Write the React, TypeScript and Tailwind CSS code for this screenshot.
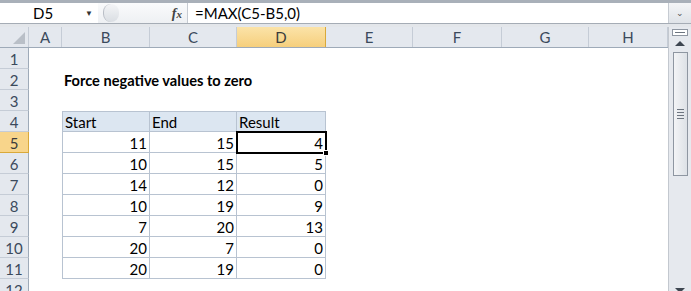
import React from 'react'

const cols = [
  { key: 'A', w: 'w-[33px]' },
  { key: 'B', w: 'w-[88px]' },
  { key: 'C', w: 'w-[87px]' },
  { key: 'D', w: 'w-[89px]' },
  { key: 'E', w: 'w-[87px]' },
  { key: 'F', w: 'w-[89px]' },
  { key: 'G', w: 'w-[87px]' },
  { key: 'H', w: 'flex-1' },
]

const data = [
  [11, 15, 4],
  [10, 15, 5],
  [14, 12, 0],
  [10, 19, 9],
  [7, 20, 13],
  [20, 7, 0],
  [20, 19, 0],
]

const font = "font-['Lato','Liberation_Sans',sans-serif]"

function RowHeader({ n, active }: { n: number; active?: boolean }) {
  return (
    <div
      className={`flex h-full w-[29px] shrink-0 items-end justify-center border-b border-r pb-[1px] text-[15px] leading-none ${
        active
          ? 'border-b-[#d9a93a] border-r-[#d9a93a] bg-[#f8d58b] text-[#3b3b3b]'
          : 'border-b-[#c5ccd6] border-r-[#9eaab8] bg-[#e4e8ee] text-[#3b4a5c]'
      }`}
    >
      {n}
    </div>
  )
}

function TableRow({ row, values }: { row: number; values: (string | number)[] }) {
  const header = row === 4
  return (
    <>
      <div className="w-[33px] shrink-0" />
      {values.map((v, i) => {
        const active = row === 5 && i === 2
        return (
          <div
            key={i}
            className={`relative flex h-full shrink-0 items-end border-b border-r border-[#b8c3d1] pb-[1px] text-[15px] leading-none text-black ${
              i === 0 ? 'w-[88px] border-l' : i === 1 ? 'w-[87px]' : 'w-[89px]'
            } ${header ? 'justify-start border-t bg-[#dce6f1] pl-[2px]' : 'justify-end pr-[2px]'} ${
              active ? 'z-10 outline-2 -outline-offset-1 outline-black' : ''
            }`}
          >
            {v}
            {active && (
              <div className="absolute -bottom-[4px] -right-[4px] h-[6px] w-[6px] border border-white bg-black" />
            )}
          </div>
        )
      })}
    </>
  )
}

export default function App() {
  const rows = Array.from({ length: 12 }, (_, i) => i + 1)
  return (
    <div className={`flex h-[291px] w-[691px] flex-col overflow-hidden bg-white ${font}`}>
      {/* formula bar */}
      <div className="h-[3px] shrink-0 bg-[#a9b0b9]" />
      <div className="flex h-[21px] shrink-0 items-stretch border-b border-[#a5acb5] bg-[#eceef1]">
        <div className="flex w-[98px] items-center bg-white text-[15px] text-black">
          <span className="ml-[33px]">D5</span>
          <span className="ml-auto mr-[5px] text-[8px] text-[#333]">▼</span>
        </div>
        <div className="flex w-[89px] items-center bg-gradient-to-b from-[#fafbfc] to-[#eef0f3]">
          <div className="ml-[5px] h-[18px] w-[16px] rounded-full border-l border-[#b9bec6] bg-gradient-to-b from-[#f4f5f7] to-[#dadee3]" />
          <span className="ml-auto mr-[5px] font-['Liberation_Serif',serif] text-[14px] font-bold italic text-[#444]">
            f<span className="text-[11px]">x</span>
          </span>
        </div>
        <div className="flex flex-1 items-center border-l border-[#c6cbd2] bg-white pl-[7px] text-[15px] text-black">
          =MAX(C5-B5,0)
        </div>
        <div className="flex w-[23px] items-center justify-center border-l border-[#c6cbd2] bg-gradient-to-b from-[#f4f5f7] to-[#dfe3e8] text-[9px] text-[#555]">
          ⌄
        </div>
      </div>
      <div className="h-[3px] shrink-0 bg-[#e3e6ea]" />

      <div className="flex min-h-0 flex-1">
        {/* sheet */}
        <div className="flex w-[668px] flex-col">
          {/* column header */}
          <div className="flex h-[21px] shrink-0 border-b border-[#9eaab8] bg-[#e4e8ee]">
            <div className="relative w-[29px] shrink-0 border-r border-[#c5ccd6]">
              <div className="absolute bottom-[3px] right-[3px] h-0 w-0 border-b-[12px] border-l-[12px] border-b-[#b9bfc7] border-l-transparent" />
            </div>
            {cols.map((c) => (
              <div
                key={c.key}
                className={`flex shrink-0 items-center justify-center border-r text-[15px] ${c.w} ${
                  c.key === 'D'
                    ? 'border-r-[#d9a93a] bg-gradient-to-b from-[#fbe3a8] to-[#f6cf7c] text-[#3b3b3b]'
                    : 'border-r-[#c5ccd6] text-[#3b4a5c]'
                }`}
              >
                {c.key}
              </div>
            ))}
          </div>

          {rows.map((r) => (
            <div key={r} className="flex h-[21px] shrink-0">
              <RowHeader n={r} active={r === 5} />
              {r === 2 && (
                <>
                  <div className="w-[33px] shrink-0" />
                  <div className="flex items-end whitespace-nowrap pb-[1px] pl-[2px] text-[14.6px] font-bold leading-none text-black">
                    Force negative values to zero
                  </div>
                </>
              )}
              {r === 4 && <TableRow row={4} values={['Start', 'End', 'Result']} />}
              {r >= 5 && r <= 11 && <TableRow row={r} values={data[r - 5]} />}
            </div>
          ))}
        </div>

        {/* vertical scrollbar */}
        <div className="flex w-[23px] flex-col items-center border-l border-[#c3c8cf] bg-[#e6e9ee]">
          <div className="mt-[2px] flex h-[7px] w-[16px] items-center justify-center border border-[#8e96a1] bg-white">
            <div className="h-[1px] w-[10px] bg-[#6d7580]" />
          </div>
          <div className="mt-[5px] h-0 w-0 border-x-[5px] border-b-[5px] border-x-transparent border-b-[#3e4650]" />
          <div className="mt-[6px] flex h-[124px] w-[15px] flex-col items-center justify-center gap-[2px] border border-[#8e96a1] bg-gradient-to-r from-[#f3f4f6] to-[#dde1e6]">
            <div className="h-[1px] w-[7px] bg-[#6d7580]" />
            <div className="h-[1px] w-[7px] bg-[#6d7580]" />
            <div className="h-[1px] w-[7px] bg-[#6d7580]" />
            <div className="h-[1px] w-[7px] bg-[#6d7580]" />
          </div>
          <div className="mt-auto mb-[-2px] h-0 w-0 border-x-[5px] border-t-[5px] border-x-transparent border-t-[#3e4650]" />
        </div>
      </div>
    </div>
  )
}
